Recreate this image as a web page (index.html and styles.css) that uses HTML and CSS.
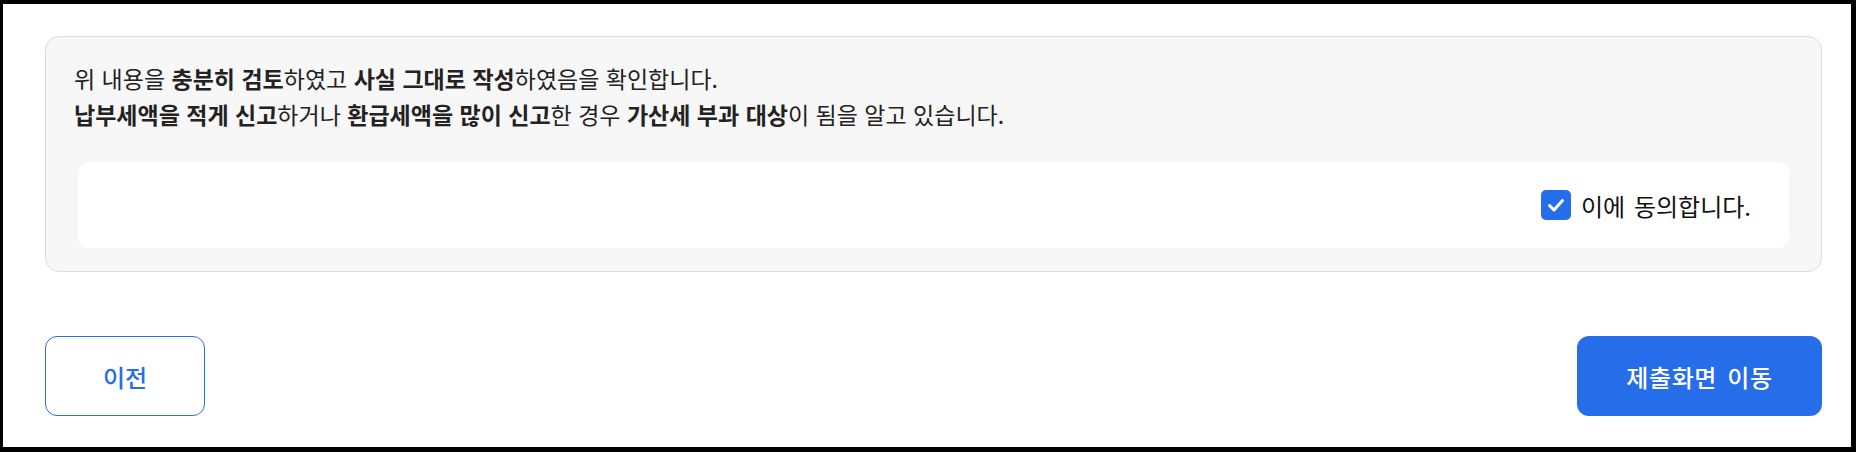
FILE: index.html
```html
<!DOCTYPE html>
<html lang="ko">
<head>
<meta charset="utf-8">
<title>확인</title>
<link rel="stylesheet" href="styles.css">
</head>
<body>
<div class="frame">
  <section class="panel">
    <p class="notice">위 내용을 <b>충분히 검토</b>하였고 <b>사실 그대로 작성</b>하였음을 확인합니다.<br><b>납부세액을 적게 신고</b>하거나 <b>환급세액을 많이 신고</b>한 경우 <b>가산세 부과 대상</b>이 됨을 알고 있습니다.</p>
    <div class="agree-box">
      <label class="agree">
        <span class="check"><svg width="30" height="30" viewBox="0 0 30 30"><rect x="0" y="0" width="30" height="30" rx="5" fill="#266de9"/><path d="M8.5 15.5 L13 20 L21.5 10.5" fill="none" stroke="#fff" stroke-width="3" stroke-linecap="round" stroke-linejoin="round"/></svg></span>
        <span class="agree-text">이에 동의합니다.</span>
      </label>
    </div>
  </section>
  <div class="actions">
    <button class="btn btn-outline">이전</button>
    <button class="btn btn-primary">제출화면 이동</button>
  </div>
</div>
</body>
</html>
```

FILE: styles.css
```css
html, body {
  margin: 0;
  padding: 0;
  background: #000;
}
body {
  font-family: "Noto Sans CJK KR", "Noto Sans", sans-serif;
  color: #222;
}
.frame {
  box-sizing: border-box;
  background: #fff;
  margin: 4px 0 0 3px;
  width: 1848px;
  height: 443px;
  padding: 32px 29px 30px 42px;
}
.panel {
  box-sizing: border-box;
  background: #f7f7f7;
  border: 1px solid #dcdcdc;
  border-radius: 14px;
  padding: 23px 32px 23px 32px;
}
.notice {
  margin: 0 0 0 -4px;
  font-size: 23px;
  line-height: 36px;
  color: #222;
}
.notice b {
  font-weight: 700;
}
.agree-box {
  margin-top: 30px;
  height: 86px;
  background: #fff;
  border-radius: 12px;
  display: flex;
  align-items: center;
  justify-content: flex-end;
  padding: 0 38px;
}
.agree {
  display: flex;
  align-items: center;
  gap: 10px;
}
.check {
  display: flex;
  width: 30px;
  height: 30px;
}
.agree-text {
  font-size: 24px;
  color: #111;
  word-spacing: 2px;
}
.actions {
  margin-top: 64px;
  display: flex;
  justify-content: space-between;
}
.btn {
  box-sizing: border-box;
  height: 80px;
  border-radius: 12px;
  font-family: "Noto Sans CJK KR", "Noto Sans", sans-serif;
  font-size: 24px;
  font-weight: 500;
  cursor: pointer;
}
.btn-outline {
  width: 160px;
  background: #fff;
  border: 1px solid #266de9;
  color: #266de9;
}
.btn-primary {
  width: 245px;
  background: #266de9;
  border: none;
  color: #fff;
  word-spacing: 3px;
  letter-spacing: 0.6px;
}
```
